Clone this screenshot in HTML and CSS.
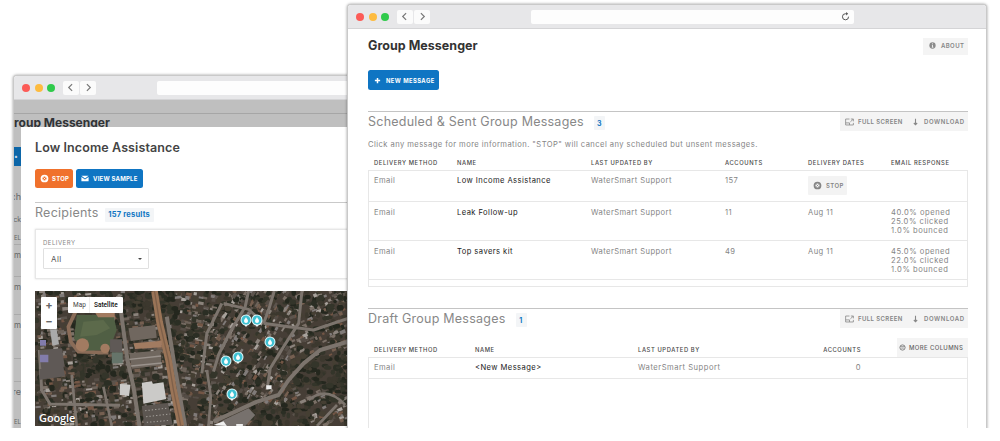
FILE: index.html
```html
<!DOCTYPE html>
<html lang="en">
<head>
<meta charset="utf-8">
<title>Group Messenger</title>
<link rel="stylesheet" href="styles.css">
</head>
<body>
<svg width="0" height="0" class="defs">
  <symbol id="i-back" viewBox="0 0 10 10"><path d="M6.8 1.2 3 5l3.800 3.800" fill="none" stroke="#777" stroke-width="1.300"/></symbol>
  <symbol id="i-next" viewBox="0 0 10 10"><path d="M3.200 1.200 7 5 3.200 8.800" fill="none" stroke="#777" stroke-width="1.300"/></symbol>
  <symbol id="i-stop" viewBox="0 0 10 10"><circle cx="5" cy="5" r="3.300" fill="none" stroke="currentColor" stroke-width="2"/><path d="M3.800 3.800l2.400 2.400M6.200 3.800 3.800 6.200" stroke="currentColor" stroke-width=".9"/></symbol>
  <symbol id="i-mail" viewBox="0 0 10 8"><path d="M.5.500h9L5 4zM.5 2l4.500 3.400L9.500 2v5.500h-9z" fill="currentColor"/></symbol>
  <symbol id="i-plus" viewBox="0 0 8 8"><path d="M4 1v6M1 4h6" stroke="currentColor" stroke-width="1.700"/></symbol>
  <symbol id="i-info" viewBox="0 0 8 8"><circle cx="4" cy="4" r="3.600" fill="#8b8b8b"/><path d="M4 1.500v1M3.300 3.500H4v2.300M3.200 6h1.800" stroke="#fff" stroke-width=".9" fill="none"/></symbol>
  <symbol id="i-full" viewBox="0 0 10 8"><path d="M5 .7H.7v6.600h8.600V5M.7 5h4.300v2.300M6.500.7h2.800v2.600M9 1 6 3.800" fill="none" stroke="#888" stroke-width=".9"/></symbol>
  <symbol id="i-down" viewBox="0 0 6 9"><path d="M3 .5v7M1 5.700l2 2 2-2" fill="none" stroke="#888" stroke-width="1.300"/></symbol>
  <symbol id="i-gear" viewBox="0 0 8 8"><circle cx="4" cy="4" r="3" fill="none" stroke="#777" stroke-width="1"/><path d="M1.500 3h5M2.500 4.700h3" stroke="#777" stroke-width=".8"/></symbol>
  <symbol id="i-reload" viewBox="0 0 10 10"><path d="M8.400 5.200A3.400 3.400 0 1 1 5 1.900h1.500" fill="none" stroke="#555" stroke-width="1.100"/><path d="M5.700 0 8 1.900 5.700 3.900z" fill="#555"/></symbol>
  <symbol id="i-pin" viewBox="-18 -18 36 42"><path d="M-7 12 0 21 7 12z" fill="#fff"/><circle r="16.500" fill="#e4f6f8"/><circle r="13.500" fill="#3fc1d2"/><path d="M0-9C2-4 6-1 6 3a6 6 0 0 1-12 0C-6-1-2-4 0-9z" fill="#fff"/></symbol>
</svg>

<main class="desktop">
  <section class="window back">
    <header class="bar">
      <i class="dot red"></i><i class="dot amber"></i><i class="dot green"></i>
      <span class="nav"><svg><use href="#i-back"/></svg></span><span class="nav"><svg><use href="#i-next"/></svg></span>
      <div class="address"></div>
    </header>
    <div class="shade">
      <h1 class="behind-title">Group Messenger</h1>
      <div class="behind-strip">
        <i class="behind-button">&#8226;</i>
        <span class="gap-a">ch</span><span class="gap-b">ck</span><span class="gap-c">EL</span>
        <span class="line gap-d">m</span><span class="line gap-e">m</span><span class="line gap-f">m</span>
        <i class="line gap-g"></i><span class="line gap-h">re</span><span class="gap-i">EL</span>
      </div>
      <article class="modal">
        <h1 class="title modal-title">Low Income Assistance</h1>
        <div class="actions">
          <button class="btn orange"><svg><use href="#i-stop"/></svg><span>STOP</span></button>
          <button class="btn blue sample"><svg><use href="#i-mail"/></svg><span>VIEW SAMPLE</span></button>
        </div>
        <div class="recipients"><h2>Recipients</h2><b class="badge results">157 results</b></div>
        <div class="filter">
          <label>DELIVERY</label>
          <div class="select"><span>All</span><i></i></div>
        </div>
        <div class="map">
          <svg class="terrain" viewBox="105 33 938 405" preserveAspectRatio="none">
            <rect x="105" y="33" width="938" height="405" fill="#463e36"/>
            <g id="houses"></g>
            <g fill="none" stroke="#7c746d" stroke-linejoin="round">
              <path stroke-width="12" d="M362 90 382 240 400 320 418 438M500 110 522 250 555 438"/>
              <path stroke-width="9" d="M745 33 735 80 690 155 655 225 640 275M822 33 805 90 790 130M905 33 895 130 850 200 810 265 800 330M665 70 620 160 605 280M118 210 125 330 150 372 360 376M790 130 865 140 940 150 1043 115"/>
              <path stroke-width="12" d="M1043 185 960 210 910 250 865 300 835 345 770 365 640 425"/>
              <path stroke-width="8" d="M925 360Q980 315 1035 375M1010 375 950 438M620 270 632 350 625 438M670 70 745 88 790 130M215 285 230 438M310 320 335 438"/>
            </g>
            <path d="M463 33 478 125 505 240 520 330 542 438" fill="none" stroke="#9a7457" stroke-width="20"/>
            <path d="M463 33 478 125 505 240 520 330 542 438" fill="none" stroke="#7e604a" stroke-width="4"/>
            <path d="M228 92 205 140 212 185 235 215 325 218" stroke="#8a6c58" stroke-width="11" fill="none"/>
            <path d="M230 105 340 105 350 150 327 210 250 212 222 175z" fill="#505f44"/>
            <path d="M250 125l60-5 20 25-40 20-50 5z" fill="#5c6a4b"/>
            <g fill="#a27b61"><circle cx="247" cy="195" r="20"/><circle cx="315" cy="205" r="14"/><path d="M280 90h64v22h-50zM400 190l85-8v20l-80 5z"/></g>
            <path d="M330 178h36v38h-36zM118 210l68-5 8 55-70 8zM118 267l72-8 5 30-75 10z" fill="#5f5956"/>
            <path d="M335 217h33v33h-33z" fill="#66746a"/>
            <path d="M385 145l80-10 5 38-78 10zM388 220l92-9 5 45-90 10z" fill="#70675f"/>
            <path d="M388 238l95-10M393 258l92-9" stroke="#9a928c" stroke-width="4"/>
            <path d="M425 308l30-4 3 7 32-4 8 50-68 14zM359 312l32 2-4 34-28-3z" fill="#cbcac8"/>
            <path d="M425 378l78-9 15 65-85 4z" fill="#5c5651"/>
            <path d="M435 392l70-8M438 410l73-8M440 427l70-6" stroke="#a4a09b" stroke-width="3" stroke-dasharray="4 6"/>
            <path d="M670 420 745 385 765 405 735 438h-90z" fill="#77716d"/>
            <path d="M640 435 670 424 680 438zM708 432h20v6h-20zM798 316h16v12h-16z" fill="#eee"/>
            <path d="M120 180h18v17h-18zM120 224h25v23h-25z" fill="#827cab"/>
            <path d="M150 148h20l7 45-20 4z" fill="#aaa"/>
          </svg>
          <div class="zoom"><span>+</span><span>&#8722;</span></div>
          <div class="kind"><span>Map</span><b>Satellite</b></div>
          <svg class="pin p1"><use href="#i-pin"/></svg><svg class="pin p2"><use href="#i-pin"/></svg>
          <svg class="pin p3"><use href="#i-pin"/></svg><svg class="pin p4"><use href="#i-pin"/></svg>
          <svg class="pin p5"><use href="#i-pin"/></svg><svg class="pin p6"><use href="#i-pin"/></svg>
          <span class="google">Google</span>
        </div>
      </article>
    </div>
  </section>

  <section class="window front">
    <header class="bar">
      <i class="dot red"></i><i class="dot amber"></i><i class="dot green"></i>
      <span class="nav"><svg><use href="#i-back"/></svg></span><span class="nav"><svg><use href="#i-next"/></svg></span>
      <div class="address"><svg><use href="#i-reload"/></svg></div>
    </header>
    <div class="page">
      <div class="page-head">
        <h1 class="title page-title">Group Messenger</h1>
        <div class="tools about"><svg class="w8"><use href="#i-info"/></svg><span class="about-text">ABOUT</span></div>
      </div>
      <button class="btn blue new"><svg><use href="#i-plus"/></svg><span>NEW MESSAGE</span></button>

      <div class="section first">
        <h2 class="h-sched">Scheduled &amp; Sent Group Messages</h2><b class="badge">3</b>
        <div class="tools"><svg class="w10"><use href="#i-full"/></svg><span class="full">FULL SCREEN</span><svg class="w6"><use href="#i-down"/></svg><span class="down">DOWNLOAD</span></div>
      </div>
      <p class="hint">Click any message for more information. "STOP" will cancel any scheduled but unsent messages.</p>
      <div class="row thead"><span>DELIVERY METHOD</span><span>NAME</span><span>LAST UPDATED BY</span><span>ACCOUNTS</span><span>DELIVERY DATES</span><span>EMAIL RESPONSE</span></div>
      <div class="tbody sent">
        <div class="row short"><span>Email</span><span class="name">Low Income Assistance</span><span>WaterSmart Support</span><span>157</span><span class="stop"><svg><use href="#i-stop"/></svg>STOP</span><span></span></div>
        <div class="row"><span>Email</span><span class="name">Leak Follow-up</span><span>WaterSmart Support</span><span>11</span><span>Aug 11</span><span class="stats">40.0% opened<br>25.0% clicked<br>1.0% bounced</span></div>
        <div class="row"><span>Email</span><span class="name">Top savers kit</span><span>WaterSmart Support</span><span>49</span><span>Aug 11</span><span class="stats">45.0% opened<br>22.0% clicked<br>1.0% bounced</span></div>
      </div>

      <div class="section second">
        <h2 class="h-draft">Draft Group Messages</h2><b class="badge">1</b>
        <div class="tools"><svg class="w10"><use href="#i-full"/></svg><span class="full">FULL SCREEN</span><svg class="w6"><use href="#i-down"/></svg><span class="down">DOWNLOAD</span></div>
      </div>
      <div class="row thead draft-head"><span>DELIVERY METHOD</span><span>NAME</span><span>LAST UPDATED BY</span><span class="num">ACCOUNTS</span><span class="more"><svg><use href="#i-gear"/></svg>MORE COLUMNS</span></div>
      <div class="tbody drafts">
        <div class="row"><span>Email</span><span class="name">&lt;New Message&gt;</span><span class="wide">WaterSmart Support</span><span class="num">0</span></div>
      </div>
    </div>
  </section>
</main>
<script src="map.js"></script>
</body>
</html>
```
FILE: styles.css
```css
* { box-sizing: border-box; }
body { margin: 0; background: #fff; font-family: Inter, "Liberation Sans", sans-serif; }
h1, h2, p { margin: 0; }
button { border: 0; font: inherit; }
svg { display: block; flex: none; }
.defs { position: absolute; }
.desktop { position: relative; width: 1000px; height: 428px; overflow: hidden; }

/* browser windows */
.window { position: absolute; border: 1px solid #c9c9c9; border-bottom: 0; border-radius: 4px 4px 0 0; background: #fff; box-shadow: 0 0 3px rgba(0,0,0,.4); }
.back { left: 13px; top: 75px; width: 350px; height: 360px; }
.front { left: 347px; top: 4px; width: 640px; height: 440px; }
.bar { display: flex; align-items: center; height: 24px; padding-left: 8px; background: #e7e7e9; border-bottom: 1px solid #d4d4d6; border-radius: 3px 3px 0 0; }
.dot { width: 8px; height: 8px; margin-right: 4.500px; border-radius: 50%; }
.red { background: #fc5b57; }
.amber { background: #fdbb3f; }
.green { background: #2fca4b; }
.nav { display: grid; place-items: center; width: 16px; height: 14px; margin-right: 1.500px; border-radius: 2px; background: #fbfbfb; }
.dot + .nav { margin-left: 3px; }
.nav svg { width: 9px; height: 9px; }
.address { display: flex; justify-content: flex-end; align-items: center; height: 14px; padding-right: 4px; border-radius: 2px; background: #fdfdfd; }
.address svg { width: 9px; height: 9px; }
.front .address { width: 323px; margin-left: 99.500px; }
.back .address { width: 190px; margin-left: 59.500px; border-radius: 2px 0 0 2px; }

/* dimmed page below the dialog */
.shade { display: grid; grid-template-columns: 7px 1fr; grid-template-rows: 27px 1fr; background: #bfbfbf; height: 335px; overflow: hidden; }
.behind-title { grid-column: 1 / 3; margin-left: -9px; padding-top: 16px; height: 27px; overflow: hidden; font: 700 12px/14px Inter, sans-serif; color: #303336; background: linear-gradient(#a6a6a6, #a6a6a6) 0 13px / 100% 1px no-repeat; }
.behind-strip { display: flex; flex-direction: column; align-items: flex-end; color: #666; font-size: 8px; line-height: 10px; padding-top: 20px; }
.behind-strip span { flex: none; width: 7px; height: 10px; display: flex; justify-content: flex-end; }
.behind-button { width: 7px; height: 19px; flex: none; background: #0c66a8; color: #cde; font: 7px/19px Inter, sans-serif; }
.gap-a { margin-top: 26px; font-size: 9px; } .gap-b { margin-top: 13px; font-size: 7px; } .gap-c { margin-top: 8px; font-size: 6px; }
.line { border-top: 1px solid #aaa; }
.behind-strip .line { height: 16px; padding-top: 5px; }
.gap-d { margin-top: 1px; } .gap-e { margin-top: 16px; } .gap-f { margin-top: 22px; }
.behind-strip .gap-g { margin-top: 28px; width: 8px; height: 1px; padding: 0; flex: none; }
.gap-h { margin-top: 22px; font-size: 9px; } .gap-i { margin-top: 20px; font-size: 6px; }

/* dialog */
.modal { background: #fff; padding: 13px 0 0 14px; min-width: 0; }
.title { color: #333; font-weight: 700; line-height: 16px; }
.modal-title { font-size: 12.500px; letter-spacing: .1px; font-weight: 600; color: #444; }
.actions { display: flex; gap: 3px; margin-top: 13px; }
.btn { display: flex; align-items: center; height: 19px; padding: 0 0 0 5px; gap: 4px; border-radius: 2.500px; color: #fff; font-weight: 700; font-size: 6px; letter-spacing: .2px; white-space: nowrap; }
.btn svg { width: 9px; height: 9px; }
.orange { width: 38px; background: #f0712c; gap: 3px; }
.blue { background: #0f75c3; }
.sample { width: 67px; }
.sample svg { width: 8px; height: 7px; }
.recipients { display: flex; align-items: center; height: 26px; margin-top: 14px; border-top: 1px solid #c9c9c9; padding-bottom: 5px; }
h2 { color: #888; font-weight: 400; font-size: 12.500px; line-height: 16px; letter-spacing: .24px; white-space: nowrap; }
.badge { display: grid; place-items: center; height: 14px; width: 11px; background: #f3f5f7; color: #0f75c3; font-size: 7px; font-weight: 700; border-radius: 1px; white-space: nowrap; }
.results { width: 49px; margin-left: 6px; margin-top: 3px; font-size: 7.500px; letter-spacing: .2px; }
.filter { height: 50px; margin-top: 1px; padding: 9px 0 0 7px; border: 1px solid #e7e7e7; border-right: 0; box-shadow: 0 0 2px #d8d8d8; }
.filter label { display: block; font-size: 6px; line-height: 7px; color: #888; letter-spacing: .5px; }
.select { display: flex; align-items: center; justify-content: space-between; width: 106px; height: 21px; margin-top: 2px; padding: 0 6px 0 7px; border: 1px solid #e0e0e0; border-radius: 1px; font-size: 8px; letter-spacing: .4px; color: #555; }
.select i { border: 2px solid transparent; border-top-color: #444; border-bottom: 0; }

/* aerial map */
.map { position: relative; height: 135px; width: 313px; margin-top: 12px; }
.terrain { width: 313px; height: 135px; filter: blur(.4px); }
.zoom, .kind { position: absolute; display: flex; background: #fff; border-radius: 1px; color: #444; }
.zoom { left: 6px; top: 6px; width: 16px; height: 32px; flex-direction: column; font: 700 11px/16px Inter, sans-serif; color: #666; text-align: center; }
.kind { left: 33px; top: 6px; width: 55px; height: 16px; font: 6.500px/17px Roboto, sans-serif; }
.kind span { width: 22px; padding-left: 5px; border-right: 1px solid #eee; }
.kind b { padding-left: 4px; color: #111; font-weight: 500; }
.pin { position: absolute; width: 12px; height: 14px; }
.p1 { left: 205px; top: 22.500px; } .p2 { left: 216px; top: 22.500px; } .p3 { left: 229px; top: 45px; }
.p4 { left: 197px; top: 60px; } .p5 { left: 184.500px; top: 64px; } .p6 { left: 190.500px; top: 96.500px; }
.google { position: absolute; left: 4px; bottom: 2px; color: #fff; font: 600 11px/13px "Open Sans", sans-serif; text-shadow: 0 0 1px #333; letter-spacing: -.1px; }

/* main page */
.page { padding: 0 18px 0 20px; color: #858585; font-size: 7.600px; letter-spacing: .43px; }
.page-head { display: flex; justify-content: space-between; padding-top: 9px; height: 41px; }
.page-title { font-size: 12.500px; letter-spacing: .03px; }
.tools { display: flex; align-items: center; height: 19px; padding-left: 6px; background: #f4f4f4; font-size: 6px; letter-spacing: .4px; font-weight: 600; white-space: nowrap; }
.about { height: 17px; width: 45px; padding: 0 0 3px 6px; }
.w8 { width: 7px; height: 7px; margin-right: 5px; } .w10 { width: 9px; height: 8px; margin-right: 4px; } .w6 { width: 5px; height: 8px; margin: 0 6px 0 0; }
.full { width: 55px; }
.down { letter-spacing: .6px; }
.new { width: 71px; height: 20px; padding-left: 6px; gap: 5px; font-size: 5.800px; letter-spacing: .45px; }
.new svg { width: 7px; height: 7px; }
.section { display: flex; height: 20px; border-top: 1px solid #c4c4c4; }
.section h2 { padding-top: 2px; }
.section .badge { margin: 4px 0 0 10px; }
.section .tools { width: 128px; margin-left: auto; padding-left: 5px; }
.first { margin-top: 21px; }
.hint { margin-top: 8px; line-height: 12px; white-space: nowrap; }
.row { display: grid; grid-template-columns: 83px 134px 134px 83px 83px 1fr; padding-left: 5px; white-space: nowrap; line-height: 9px; }
.thead { height: 19px; padding: 6px 0 0 6px; color: #484848; font-size: 5.800px; letter-spacing: .6px; font-weight: 500; line-height: 12px; }
.tbody { border: 1px solid #e7e7e7; }
.tbody .row { height: 39px; padding-top: 6px; border-bottom: 1px solid #e7e7e7; }
.tbody .short { height: 31px; padding-top: 5px; }
.sent { height: 117px; }
.name { color: #222; }
.wide, .stats { letter-spacing: .52px; }
.stop { display: flex; align-items: center; gap: 4px; width: 39px; height: 19px; padding-left: 5px; background: #f3f3f3; font-weight: 600; font-size: 6px; border-radius: 1px; }
.stop svg { width: 9px; height: 9px; }
.second { margin-top: 21px; }
.draft-head, .drafts .row { grid-template-columns: 101px 163px 182px 41px 1fr; }
.draft-head { height: 29px; padding-top: 16px; }
.num { text-align: right; justify-self: end; }
.draft-head .more { display: flex; align-items: center; gap: 3px; justify-self: end; width: 71px; height: 19px; margin-top: -6px; padding-left: 2px; background: #f4f4f4; color: #666; font-size: 6px; letter-spacing: .35px; }
.more svg { width: 7px; height: 7px; }
.drafts { height: 100px; }
.drafts .row { height: 21px; padding-top: 5px; }
```
FILE: map.js
```javascript
// Scatter rooftops and tree crowns over the aerial map, aligned to each block's streets.
(function () {
  var seed = 19;
  function rnd() { seed = (seed * 16807) % 2147483647; return seed / 2147483647; }
  function pick(list) { return list[Math.floor(rnd() * list.length)]; }
  var roofs = ['#6d635a', '#7b7067', '#8b837c', '#5c544d', '#755f50', '#a8a29c', '#735645', '#554d46', '#807b79'];
  var trees = ['#2b2e24', '#34352a', '#3c382e', '#24271e', '#453f33'];
  var out = '';
  for (var i = 0; i < 3000; i++) {
    var x = 105 + rnd() * 938, y = 33 + rnd() * 405;
    var forest = (x > 880 && y > 230 && y < 320) || (x > 745 && y > 375 && x < 930) ||
      (x > 225 && x < 330 && y > 225 && y < 290) || (x > 460 && x < 520 && y < 130) || (x > 365 && x < 460 && y < 85);
    if (rnd() < (forest ? .96 : .5)) {
      out += '<ellipse cx="' + x + '" cy="' + y + '" rx="' + (5 + rnd() * 7) + '" ry="' + (4 + rnd() * 6) +
        '" fill="' + pick(trees) + '"/>';
    } else {
      var angle = x > 860 ? -25 : x > 640 ? -58 : x > 540 ? 10 : -6;
      out += '<rect x="' + x + '" y="' + y + '" width="' + (7 + rnd() * 12) + '" height="' + (5 + rnd() * 6) +
        '" fill="' + pick(roofs) + '" transform="rotate(' + angle + ' ' + x + ' ' + y + ')"/>';
    }
  }
  document.getElementById('houses').innerHTML = out;
})();
```
